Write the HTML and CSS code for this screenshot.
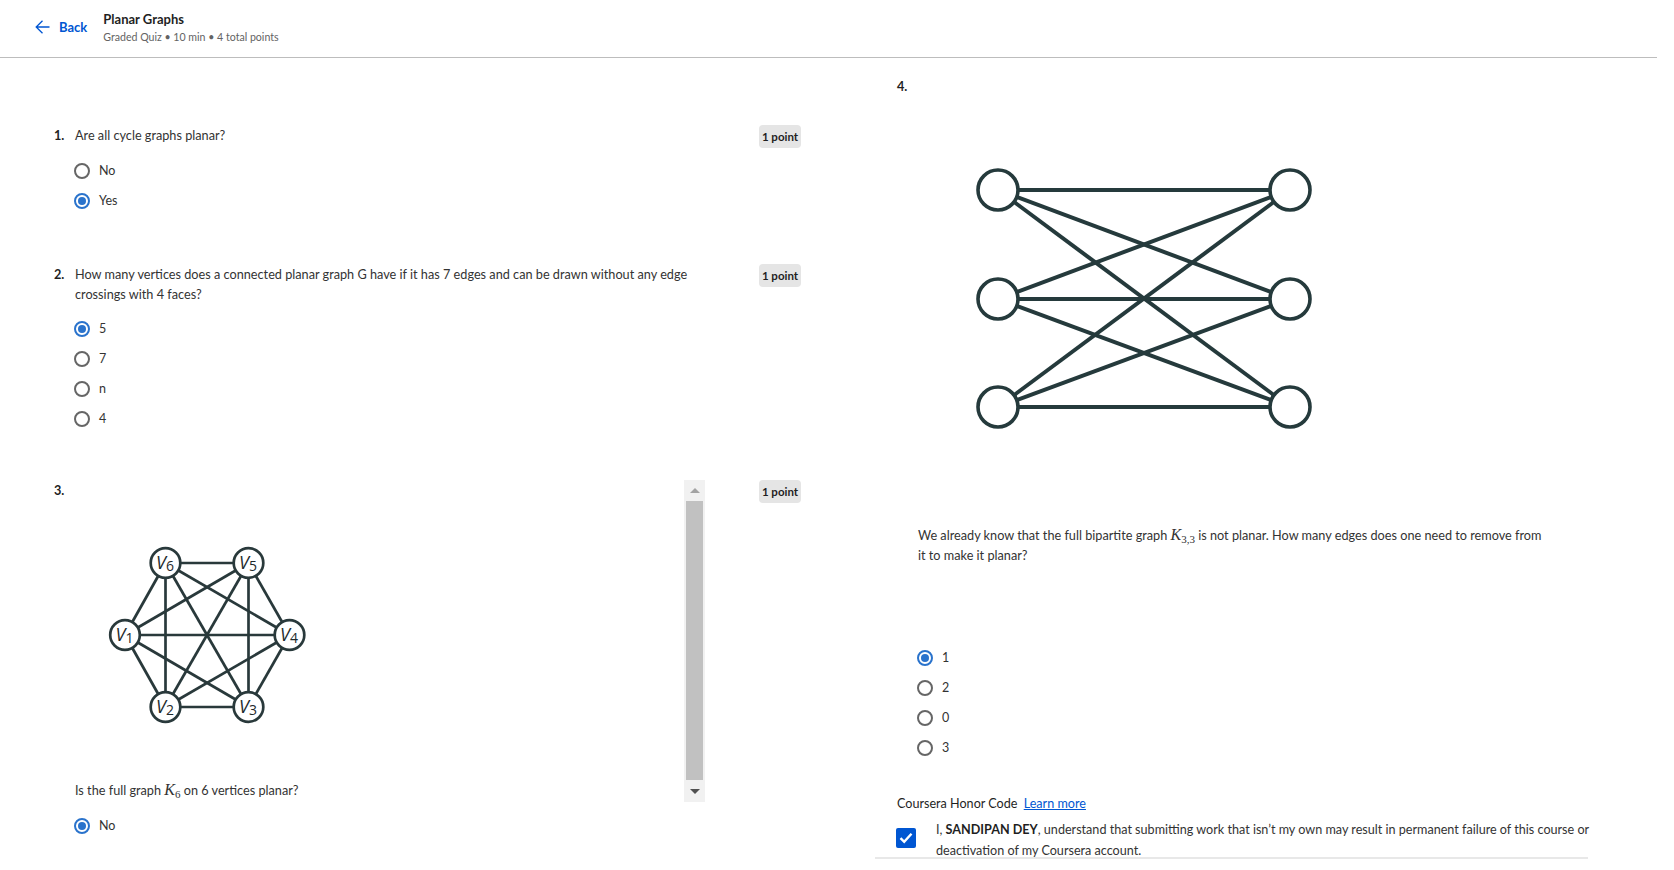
FILE: index.html
```html
<!DOCTYPE html>
<html lang="en">
<head>
<meta charset="utf-8">
<title>Planar Graphs</title>
<link rel="stylesheet" href="styles.css">
</head>
<body>
<header class="topbar">
  <a class="back" href="#">
    <svg class="back-arrow" width="15" height="14" viewBox="0 0 15 14"><path d="M7.5 0.8 L1.2 7 L7.5 13.2 M1.2 7 H14.5" fill="none" stroke="#0056d2" stroke-width="1.3"/></svg>
    <span>Back</span>
  </a>
  <div class="title-block">
    <div class="title">Planar Graphs</div>
    <div class="meta">Graded Quiz • 10 min • 4 total points</div>
  </div>
</header>

<main class="quiz">
  <section class="col-left">
    <div class="question q1">
      <div class="qnum">1.</div>
      <div class="qbody">
        <div class="qtext">Are all cycle graphs planar?</div>
        <div class="options">
          <div class="opt"><span class="radio"></span><span>No</span></div>
          <div class="opt"><span class="radio on"></span><span>Yes</span></div>
        </div>
      </div>
      <div class="badge">1 point</div>
    </div>

    <div class="question q2">
      <div class="qnum">2.</div>
      <div class="qbody">
        <div class="qtext">How many vertices does a connected planar graph G have if it has 7 edges and can be drawn without any edge crossings with 4 faces?</div>
        <div class="options q2opts">
          <div class="opt"><span class="radio on"></span><span>5</span></div>
          <div class="opt"><span class="radio"></span><span>7</span></div>
          <div class="opt"><span class="radio"></span><span>n</span></div>
          <div class="opt"><span class="radio"></span><span>4</span></div>
        </div>
      </div>
      <div class="badge">1 point</div>
    </div>

    <div class="question q3">
      <div class="qnum">3.</div>
      <div class="qbody q3body">
        <div class="q3content">
          <svg class="k6" width="260" height="300" viewBox="0 0 260 300">
            <g stroke="#29393b" stroke-width="2.7" fill="none">
              <line x1="90.5" y1="83" x2="173.5" y2="83"/>
              <line x1="90.5" y1="83" x2="50" y2="155"/>
              <line x1="90.5" y1="83" x2="214.5" y2="155"/>
              <line x1="90.5" y1="83" x2="90.5" y2="227"/>
              <line x1="90.5" y1="83" x2="173.5" y2="227"/>
              <line x1="173.5" y1="83" x2="50" y2="155"/>
              <line x1="173.5" y1="83" x2="214.5" y2="155"/>
              <line x1="173.5" y1="83" x2="90.5" y2="227"/>
              <line x1="173.5" y1="83" x2="173.5" y2="227"/>
              <line x1="50" y1="155" x2="214.5" y2="155"/>
              <line x1="50" y1="155" x2="90.5" y2="227"/>
              <line x1="50" y1="155" x2="173.5" y2="227"/>
              <line x1="214.5" y1="155" x2="90.5" y2="227"/>
              <line x1="214.5" y1="155" x2="173.5" y2="227"/>
              <line x1="90.5" y1="227" x2="173.5" y2="227"/>
            </g>
            <g stroke="#29393b" stroke-width="2.7" fill="#fff">
              <circle cx="90.5" cy="83" r="14.8"/>
              <circle cx="173.5" cy="83" r="14.8"/>
              <circle cx="50" cy="155" r="14.8"/>
              <circle cx="214.5" cy="155" r="14.8"/>
              <circle cx="90.5" cy="227" r="14.8"/>
              <circle cx="173.5" cy="227" r="14.8"/>
            </g>
            <g class="vlabel" fill="#1e2a2c" text-anchor="middle">
              <text x="90" y="89">V<tspan class="vsub" dy="2">6</tspan></text>
              <text x="173" y="89">V<tspan class="vsub" dy="2">5</tspan></text>
              <text x="49.5" y="161">V<tspan class="vsub" dy="2">1</tspan></text>
              <text x="214" y="161">V<tspan class="vsub" dy="2">4</tspan></text>
              <text x="90" y="233">V<tspan class="vsub" dy="2">2</tspan></text>
              <text x="173" y="233">V<tspan class="vsub" dy="2">3</tspan></text>
            </g>
          </svg>
          <div class="qtext">Is the full graph <span class="math"><i>K</i><sub>6</sub></span> on 6 vertices planar?</div>
          <div class="options">
            <div class="opt"><span class="radio on"></span><span>No</span></div>
          </div>
        </div>
        <div class="scrollbar" aria-hidden="true">
          <div class="sb-btn up"></div>
          <div class="sb-thumb"></div>
          <div class="sb-btn down"></div>
        </div>
      </div>
      <div class="badge">1 point</div>
    </div>
  </section>

  <section class="col-right">
    <div class="question q4">
      <div class="qnum">4.</div>
      <div class="qbody q4body">
        <svg class="k33" width="420" height="449" viewBox="0 0 420 449">
          <g stroke="#253a3c" stroke-width="4" fill="none">
            <line x1="80" y1="114" x2="372" y2="114"/>
            <line x1="80" y1="114" x2="372" y2="223"/>
            <line x1="80" y1="114" x2="372" y2="331"/>
            <line x1="80" y1="223" x2="372" y2="114"/>
            <line x1="80" y1="223" x2="372" y2="223"/>
            <line x1="80" y1="223" x2="372" y2="331"/>
            <line x1="80" y1="331" x2="372" y2="114"/>
            <line x1="80" y1="331" x2="372" y2="223"/>
            <line x1="80" y1="331" x2="372" y2="331"/>
          </g>
          <g stroke="#253a3c" stroke-width="3.6" fill="#fff">
            <circle cx="80" cy="114" r="20"/>
            <circle cx="80" cy="223" r="20"/>
            <circle cx="80" cy="331" r="20"/>
            <circle cx="372" cy="114" r="20"/>
            <circle cx="372" cy="223" r="20"/>
            <circle cx="372" cy="331" r="20"/>
          </g>
        </svg>
        <div class="qtext">We already know that the full bipartite graph <span class="math"><i>K</i><sub>3,3</sub></span> is not planar. How many edges does one need to remove from it to make it planar?</div>
        <div class="options q4opts">
          <div class="opt"><span class="radio on"></span><span>1</span></div>
          <div class="opt"><span class="radio"></span><span>2</span></div>
          <div class="opt"><span class="radio"></span><span>0</span></div>
          <div class="opt"><span class="radio"></span><span>3</span></div>
        </div>
      </div>
    </div>

    <div class="honor">
      <div class="honor-head">Coursera Honor Code <a class="learn" href="#">Learn more</a></div>
      <div class="honor-row">
        <span class="checkbox"><svg width="14" height="12" viewBox="0 0 14 12"><path d="M1.5 6.2 L5.2 9.8 L12.5 1.8" fill="none" stroke="#fff" stroke-width="2.4"/></svg></span>
        <p class="honor-text">I, <b>SANDIPAN DEY</b>, understand that submitting work that isn’t my own may result in permanent failure of this course or deactivation of my Coursera account.</p>
      </div>
    </div>
    <div class="divider"></div>
  </section>
</main>
</body>
</html>
```

FILE: styles.css
```css
* { box-sizing: border-box; }
html, body { margin: 0; padding: 0; background: #fff; }
body {
  font-family: Lato, "Noto Sans", sans-serif;
  font-size: 12.7px;
  line-height: 20px;
  color: #333;
}

/* header */
.topbar {
  width: 1657px;
  height: 58px;
  border-bottom: 1px solid #bdbdbd;
  display: flex;
  align-items: flex-start;
  padding-left: 35px;
}
.back {
  display: flex;
  align-items: center;
  gap: 9px;
  margin-top: 18px;
  height: 18px;
  color: #0056d2;
  font-weight: 700;
  font-size: 13px;
  text-decoration: none;
}
.back-arrow { display: block; }
.title-block { margin-left: 16px; padding-top: 10px; }
.title { font-size: 13px; font-weight: 700; color: #1f1f1f; line-height: 18px; }
.meta { font-size: 10.6px; color: #636363; line-height: 18px; }

/* layout */
.quiz { display: flex; }
.col-left { width: 875px; flex: none; padding: 67px 0 0 54px; }
.col-right { width: 713px; flex: none; padding-top: 18px; }

.question { display: flex; align-items: flex-start; }
.q1 { margin-bottom: 48px; }
.q2 { margin-bottom: 46px; }
.qnum { width: 21px; flex: none; font-weight: 700; color: #1f1f1f; }
.qbody { width: 630px; flex: none; }
.qtext { color: #333; }

.badge {
  margin-left: 54px;
  width: 42px;
  height: 23px;
  flex: none;
  background: #e5e5e5;
  border-radius: 4px;
  font-size: 11.5px;
  font-weight: 700;
  line-height: 23px;
  text-align: center;
  color: #1f1f1f;
}

/* options */
.options { margin-top: 11px; }
.q2opts { margin-top: 10px; }
.opt {
  display: flex;
  align-items: center;
  gap: 9px;
  height: 30px;
  font-size: 12.5px;
  color: #333;
}
.radio {
  width: 16px;
  height: 16px;
  flex: none;
  border: 2px solid #666;
  border-radius: 50%;
  margin-left: -1px;
}
.radio.on {
  border-color: #2a73cc;
  display: flex;
  align-items: center;
  justify-content: center;
}
.radio.on::after {
  content: "";
  width: 8px;
  height: 8px;
  border-radius: 50%;
  background: #2a73cc;
}

/* question 3 */
.q3body { display: flex; align-items: flex-start; }
.q3content { width: 609px; flex: none; }
.k6, .k33 { display: block; }
.vlabel text { font-family: "Open Sans", sans-serif; font-style: italic; font-size: 18px; }
.vlabel .vsub { font-size: 14px; font-style: normal; }

.math { font-family: "Liberation Serif", serif; font-size: 16px; }
.math i { font-style: italic; }
.math sub { font-size: 11px; vertical-align: -3px; line-height: 0; }

.scrollbar {
  width: 21px;
  height: 322px;
  flex: none;
  background: #f1f1f1;
  display: flex;
  flex-direction: column;
  align-items: center;
}
.sb-btn {
  width: 21px;
  height: 21px;
  flex: none;
  display: flex;
  align-items: center;
  justify-content: center;
}
.sb-btn.down { height: 22px; }
.sb-btn::after {
  content: "";
  border-left: 5px solid transparent;
  border-right: 5px solid transparent;
}
.sb-btn.up::after { border-bottom: 5px solid #a3a3a3; }
.sb-btn.down::after { border-top: 5px solid #505050; }
.sb-thumb { width: 17px; flex: 1; background: #c1c1c1; }

/* question 4 */
.q4 { padding-left: 22px; }
.q4body { width: 628px; }
.q4opts { margin-top: 78px; }

/* honor code */
.honor { padding-left: 22px; margin-top: 31px; }
.honor-head { font-size: 12.6px; color: #1f1f1f; }
.learn { color: #0056d2; text-decoration: underline; margin-left: 3px; }
.honor-row { display: flex; align-items: flex-start; margin-top: 6px; }
.checkbox {
  width: 20px;
  height: 20px;
  flex: none;
  margin-top: 8px;
  margin-left: -1px;
  background: #0056d2;
  border-radius: 2px;
  display: flex;
  align-items: center;
  justify-content: center;
}
.honor-text {
  flex: none;
  margin: 0 0 0 20px;
  width: 666px;
  font-size: 12.6px;
  line-height: 20.5px;
  color: #333;
}
.honor-text b { color: #1f1f1f; }
.divider { height: 2px; background: #e8e8e8; margin-top: -4px; }
```
